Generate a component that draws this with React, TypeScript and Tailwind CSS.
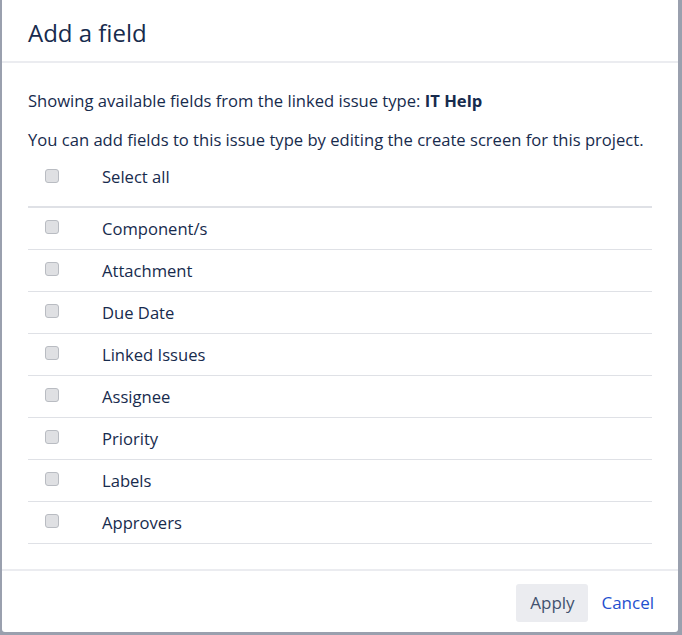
const fields = [
  "Component/s",
  "Attachment",
  "Due Date",
  "Linked Issues",
  "Assignee",
  "Priority",
  "Labels",
  "Approvers",
];

function Box() {
  return (
    <span className="mt-[-3px] ml-[17px] block h-[14px] w-[14px] shrink-0 rounded-[3px] border border-[#b9bcc2] bg-[#dfe0e3]" />
  );
}

export default function App() {
  return (
    <div
      className="flex h-[635px] w-[682px] bg-[#9aa0ae] pb-[3px] pl-[2px] pr-[4px] text-[#172b4d]"
      style={{ fontFamily: '"Open Sans", "Noto Sans", sans-serif' }}
    >
      <div className="flex w-full flex-col rounded-b-[3px] bg-white">
        <div className="flex h-[63px] items-center border-b-2 border-[#ebecf0] pl-[26px] pt-[4px]">
          <h2 className="text-[24px] font-normal leading-none">Add a field</h2>
        </div>

        <div className="flex-1 px-[26px] pt-[28px]">
          <p className="text-[16.6px] leading-[20px]">
            Showing available fields from the linked issue type: <b className="font-bold">IT Help</b>
          </p>
          <p className="mt-[19px] text-[16.6px] leading-[20px]">
            You can add fields to this issue type by editing the create screen for this project.
          </p>

          <div className="flex h-[58px] items-center border-b-2 border-[#dfe1e6] pb-[2px]">
            <Box />
            <span className="ml-[43px] text-[16.6px] leading-[20px]">Select all</span>
          </div>
          {fields.map((f) => (
            <div key={f} className="flex h-[42px] items-center border-b border-[#dfe1e6]">
              <Box />
              <span className="ml-[43px] text-[16.6px] leading-[20px]">{f}</span>
            </div>
          ))}
        </div>

        <div className="flex h-[63px] items-center justify-end gap-[13px] border-t-2 border-[#ebecf0] pr-[24px] pt-[2px]">
          <button className="h-[38px] w-[72px] rounded-[3px] bg-[#ebecf0] text-[17px] text-[#42526e]">Apply</button>
          <a className="text-[17px] text-[#1f4fcf]">Cancel</a>
        </div>
      </div>
    </div>
  );
}
